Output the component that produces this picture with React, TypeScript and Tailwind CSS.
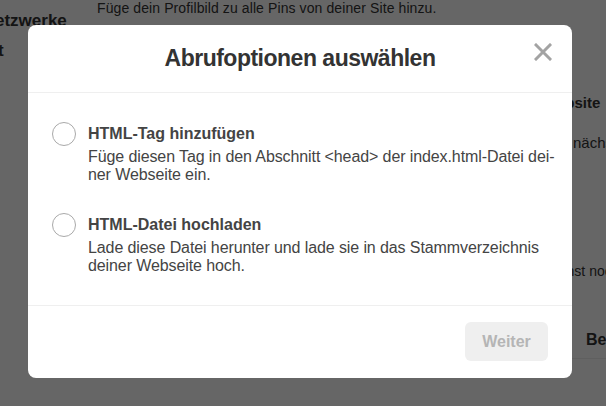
import React, { useState } from 'react';

const options = [
    {
        id: 'tag',
        title: 'HTML-Tag hinzufügen',
        lines: ['Füge diesen Tag in den Abschnitt <head> der index.html-Datei dei-', 'ner Webseite ein.'],
    },
    {
        id: 'file',
        title: 'HTML-Datei hochladen',
        lines: ['Lade diese Datei herunter und lade sie in das Stammverzeichnis', 'deiner Webseite hoch.'],
    },
];

// the settings page that sits behind the dimmed overlay
const BackgroundPage = () => (
    <div className="flex h-[406px] w-[606px] overflow-hidden bg-white text-[#333] whitespace-nowrap">
        <div className="ml-[-5px] flex w-[102px] shrink-0 flex-col pt-[10px]">
            <span className="text-[17px] font-bold leading-[22px]">etzwerke</span>
            <span className="mt-[8px] ml-[3px] text-[17px] font-bold leading-[22px]">t</span>
        </div>
        <div className="w-[446px] shrink-0">
            <p className="mt-[-1px] text-[14px] leading-[18px] tracking-[0.1px]">Füge dein Profilbild zu alle Pins von deiner Site hinzu.</p>
        </div>
        <div className="flex shrink-0 flex-col pt-[93px]">
            <span className="text-[15px] font-bold leading-[20px]">Website</span>
            <span className="mt-[20px] pl-[30px] text-[15px] leading-[20px]">nächste</span>
            <span className="mt-[108px] pl-[1px] text-[14px] leading-[20px]">kannst noch</span>
            <div className="mt-[40px] ml-[28px] flex h-[38px] items-center border-b border-[#eee] pl-[15px]">
                <span className="text-[16px] font-bold">Bearbeiten</span>
            </div>
        </div>
    </div>
);

export default function App() {
    const [selected, setSelected] = useState<string | null>(null);

    return (
        <div className="relative h-[406px] w-[606px] overflow-hidden font-['Liberation_Sans',Arial,sans-serif]">
            <BackgroundPage />
            <div className="absolute inset-0 flex items-start bg-black/60 pl-[28px] pt-[25px]">
                <div className="flex h-[353px] w-[544px] flex-col rounded-lg bg-white">
                    <div className="relative flex h-[68px] items-center justify-center border-b border-[#efefef]">
                        <h1 className="text-[23px] font-bold tracking-[-0.5px] text-[#333]">Abrufoptionen auswählen</h1>
                        <button className="absolute right-[20px] top-[18px] flex h-[18px] w-[18px] items-center justify-center">
                            <svg width="18" height="18" viewBox="0 0 18 18">
                                <path d="M2 2 L16 16 M16 2 L2 16" stroke="#a3a3a3" strokeWidth="3" strokeLinecap="square" />
                            </svg>
                        </button>
                    </div>
                    <div className="flex flex-1 flex-col gap-[29px] pl-6 pr-4 pt-[29px]">
                        {options.map(opt => (
                            <label key={opt.id} className="flex cursor-pointer gap-3" onClick={() => setSelected(opt.id)}>
                                <span className="flex h-6 w-6 shrink-0 items-center justify-center rounded-full border border-[#a9a9a9]">
                                    {selected === opt.id && <span className="h-3 w-3 rounded-full bg-[#333]" />}
                                </span>
                                <div className="pt-[3px]">
                                    <p className="text-[16px] font-bold leading-[17px] text-[#444]">{opt.title}</p>
                                    <p className="mt-[6px] whitespace-nowrap text-[16px] leading-[18px] tracking-[-0.1px] text-[#444]">
                                        {opt.lines[0]}
                                        <br />
                                        {opt.lines[1]}
                                    </p>
                                </div>
                            </label>
                        ))}
                    </div>
                    <div className="flex justify-end border-t border-[#efefef] px-6 pt-4 pb-[17px]">
                        <button disabled className="h-[39px] w-[83px] rounded-md bg-[#efefef] text-[16px] font-bold text-[#b5b5b5]">Weiter</button>
                    </div>
                </div>
            </div>
        </div>
    );
}
